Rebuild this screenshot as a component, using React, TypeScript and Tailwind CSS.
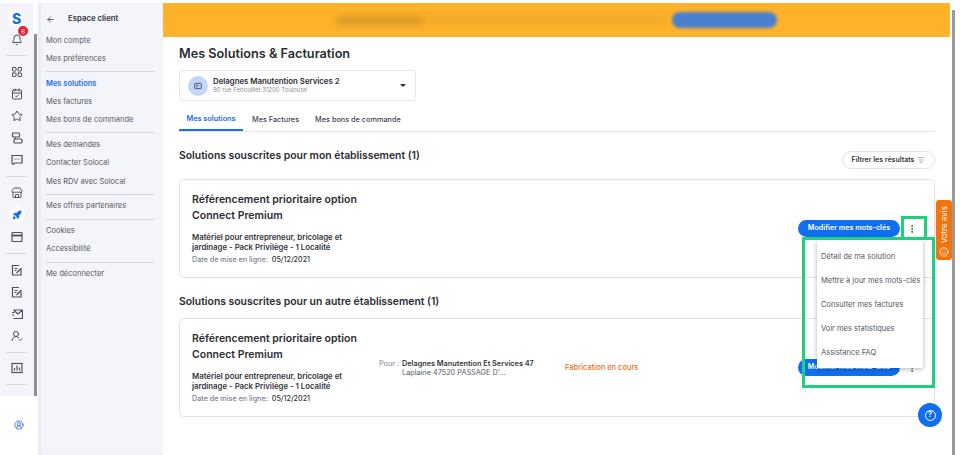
import React from "react";
import { ArrowLeft, Bell, CalendarCheck, CircleUserRound, EllipsisVertical, LayoutGrid, ListFilter, Rocket, Smile, Star, Store, UserRoundCheck } from "lucide-react";

const font = "font-['Inter','Noto_Sans',sans-serif]";

const navGroups = [
  ["Mon compte", "Mes préférences"],
  ["Mes solutions", "Mes factures", "Mes bons de commande"],
  ["Mes demandes", "Contacter Solocal", "Mes RDV avec Solocal"],
  ["Mes offres partenaires"],
  ["Cookies", "Accessibilité"],
  ["Me déconnecter"],
];

const menuItems = [
  "Détail de ma solution",
  "Mettre à jour mes mots-clés",
  "Consulter mes factures",
  "Voir mes statistiques",
  "Assistance FAQ",
];

function Glyph({ children }: { children: React.ReactNode }) {
  return (
    <svg width="12" height="12" viewBox="0 0 12 12" fill="none" stroke="currentColor" strokeWidth="1.2">
      {children}
    </svg>
  );
}

const ServerIcon = () => (
  <Glyph>
    <rect x="1.5" y="1" width="7" height="4" rx="1" />
    <rect x="3" y="7" width="8" height="4" rx="1" />
    <path d="M4 5v2" />
  </Glyph>
);
const ChatIcon = () => (
  <Glyph>
    <path d="M1 1.5h10v7.5H4l-2 1.5-1-1.5z" />
    <path d="M3.5 5.2h.8M5.6 5.2h.8M7.7 5.2h.8" />
  </Glyph>
);
const WindowIcon = () => (
  <Glyph>
    <rect x="1" y="1.5" width="10" height="9" rx="1" />
    <path d="M1 4.5h10" strokeWidth="1.8" />
  </Glyph>
);
const EditIcon = () => (
  <Glyph>
    <path d="M10 5.5V11H1.5V1.5H8" />
    <path d="M3.5 4.5h3M3.5 6.5h2M5.5 9l5-5" />
  </Glyph>
);
const MailIcon = () => (
  <Glyph>
    <path d="M2.5 2h9v8.5h-9M1 4.5h2.5M1 7h2M2.5 2l4.5 4 4.5-4" />
  </Glyph>
);
const ChartIcon = () => (
  <Glyph>
    <rect x="1" y="1.5" width="10" height="9" />
    <path d="M3.5 8.5V6M6 8.5V3.5M8.5 8.5V5.5" />
  </Glyph>
);
const PlaceIcon = () => (
  <svg width="8" height="8" viewBox="0 0 12 12" fill="none" stroke="currentColor" strokeWidth="1.4">
    <rect x="1" y="2" width="10" height="8" rx="1" />
    <path d="M3 5h4M3 7.5h2M8.5 7.5h1" />
  </svg>
);

function RailIcon({ children }: { children: React.ReactNode }) {
  return <div className="flex h-[22px] items-center justify-center text-[#4b4f5c]">{children}</div>;
}

function RailRule() {
  return <div className="mx-[6px] h-px bg-[#d6d7dc]" />;
}

function Rail() {
  return (
    <aside className="relative flex h-full w-[38px] shrink-0 flex-col">
      <div className="flex w-[33px] flex-1 flex-col bg-[#f4f5fb]">
        <div className="flex justify-center pt-[8px]">
          <div className="flex h-[15px] w-[15px] items-center justify-center rounded-[3px] bg-white text-[14px] leading-none font-extrabold text-[#0f6ff0]">
            S
          </div>
        </div>
        <div className="relative mt-[3px] mb-[4px]">
          <RailIcon>
            <Bell size={12} />
          </RailIcon>
          <span className="absolute top-[-3px] left-[18px] flex h-[10px] w-[10px] items-center justify-center rounded-full bg-[#e8212e] text-[6px] text-white">
            6
          </span>
        </div>
        <RailRule />
        <div className="mt-[5px] mb-[5px] flex flex-col">
          <RailIcon><LayoutGrid size={12} /></RailIcon>
          <RailIcon><CalendarCheck size={12} /></RailIcon>
          <RailIcon><Star size={12} /></RailIcon>
          <RailIcon><ServerIcon /></RailIcon>
          <RailIcon><ChatIcon /></RailIcon>
        </div>
        <RailRule />
        <div className="mt-[5px] mb-[5px] flex flex-col">
          <RailIcon><Store size={12} /></RailIcon>
          <div className="flex h-[22px] items-center justify-center">
            <div className="flex h-[16px] w-[16px] items-center justify-center rounded-full bg-white">
              <Rocket size={10} className="fill-[#0f6ff0] text-[#0f6ff0]" />
            </div>
          </div>
          <RailIcon><WindowIcon /></RailIcon>
        </div>
        <RailRule />
        <div className="mt-[5px] mb-[5px] flex flex-col">
          <RailIcon><EditIcon /></RailIcon>
          <RailIcon><EditIcon /></RailIcon>
          <RailIcon><MailIcon /></RailIcon>
          <RailIcon><UserRoundCheck size={12} /></RailIcon>
        </div>
        <RailRule />
        <div className="mt-[4px] mb-[5px]">
          <RailIcon><ChartIcon /></RailIcon>
        </div>
        <RailRule />
        <div className="h-[11px]" />
        <div className="-mr-[5px] flex flex-1 justify-center bg-white pt-[24px]">
          <CircleUserRound size={10} className="text-[#2f6fe4]" />
        </div>
      </div>
      {/* rail scrollbar */}
      <div className="absolute top-[31px] right-0 h-[362px] w-[5px] border-r border-l border-r-white border-l-[#f4f5fb] bg-[#8f8f8f]" />
    </aside>
  );
}

function SubNav() {
  return (
    <nav className="h-full w-[125px] shrink-0 bg-[#f4f5fb] pr-[8px] pl-[8px] shadow-[inset_3px_0_3px_rgba(0,0,0,0.04)]">
      <div className="flex h-[28px] items-center pt-[4px] text-[#33363f]">
        <ArrowLeft size={9} />
        <span className="ml-[13px] text-[7.8px] font-semibold">Espace client</span>
      </div>
      {navGroups.map((group, i) => (
        <div key={i} className={i > 0 ? "border-t border-[#d5d6da] pt-[2px]" : ""}>
          {group.map((label, j) => (
            <div
              key={label}
              className={`flex h-[18.3px] items-center text-[7.5px] whitespace-nowrap ${
                label === "Mes solutions" ? "font-semibold text-[#1e6cf0]" : "text-[#55585f]"
              } ${j === group.length - 1 ? "mb-[3.5px]" : ""}`}
            >
              {label}
            </div>
          ))}
        </div>
      ))}
    </nav>
  );
}

function Banner() {
  return (
    <div className="flex h-[34px] items-center overflow-hidden bg-[#fdb22a]">
      <div className="ml-[172px] h-[9px] w-[90px] rounded-full bg-[#d99a26] blur-[3px]" />
      <div className="ml-[4px] h-[6px] w-[235px] rounded-full bg-[#eaa82a] blur-[3px]" />
      <div className="ml-[8px] h-[16px] w-[105px] rounded-full bg-[#4a80cf] blur-[1.5px]" />
    </div>
  );
}

function SolutionCard({ children, action }: { children?: React.ReactNode; action?: React.ReactNode }) {
  return (
    <div className="flex h-[99px] items-center rounded-[5px] border border-[#e2e3e6] bg-white pl-[12px]">
      <div className="w-[187px] shrink-0">
        <div className="text-[10.5px] leading-[16px] font-semibold text-[#2b2d33]">Référencement prioritaire option</div>
        <div className="text-[10.5px] leading-[16px] font-semibold text-[#2b2d33]">Connect Premium</div>
        <div className="mt-[8px] text-[7.8px] leading-[10px] font-semibold whitespace-nowrap text-[#33353b]">
          Matériel pour entrepreneur, bricolage et
          <br />
          jardinage - Pack Privilège - 1 Localité
        </div>
        <div className="mt-[2px] text-[7.2px] leading-[12px] font-medium text-[#7c8194]">
          Date de mise en ligne: <span className="ml-[2px] text-[#33353b]">05/12/2021</span>
        </div>
      </div>
      {children}
      <div className="ml-auto flex items-center pr-[13px]">{action}</div>
    </div>
  );
}

function KeywordsAction() {
  return (
    <>
      <button className="flex h-[17px] w-[102px] items-center justify-center rounded-full bg-[#0f6ff0] text-[7.2px] font-semibold whitespace-nowrap text-white">
        Modifier mes mots-clés
      </button>
      <span className="ml-[3px] flex w-[18px] justify-center text-[#3b3e47]">
        <EllipsisVertical size={10} />
      </span>
    </>
  );
}

export default function App() {
  return (
    <div className={`relative flex h-[455px] w-[960px] overflow-hidden bg-white pt-[3px] ${font}`}>
      <Rail />
      <SubNav />
      <main className="h-full w-[787px] shrink-0 bg-white">
        <Banner />
        <div className="pr-[15px] pl-[16px]">
          <h1 className="mt-[7px] text-[12.7px] leading-[20px] font-semibold text-[#2b2d33]">Mes Solutions &amp; Facturation</h1>
          <div className="mt-[6px] flex h-[31px] w-[237px] items-center rounded-[3px] border border-[#e6e7ea] pr-[9px] pl-[8px]">
            <div className="flex h-[20px] w-[20px] items-center justify-center rounded-full bg-[#c3d8f9] text-[#44506a]">
              <PlaceIcon />
            </div>
            <div className="ml-[5px] flex-1">
              <div className="text-[7.8px] leading-[9px] font-semibold text-[#2b2d33]">Delagnes Manutention Services 2</div>
              <div className="text-[6px] leading-[8px] text-[#8a8d95]">90 rue Fenouillet 31200 Toulouse</div>
            </div>
            <span className="h-0 w-0 border-x-[3px] border-t-[3px] border-x-transparent border-t-[#2b2d33]" />
          </div>
          <div className="mt-[5px] flex h-[26px] border-b border-[#e4e5e8] pt-[3px] text-[7.3px] font-medium text-[#44474f]">
            <div className="flex w-[64px] items-center justify-center border-b-2 border-[#1e6cf0] font-semibold text-[#1e6cf0]">Mes solutions</div>
            <div className="ml-[9px] flex items-center">Mes Factures</div>
            <div className="ml-[16px] flex items-center">Mes bons de commande</div>
          </div>
          <div className="mt-[16px] flex items-start justify-between">
            <h2 className="text-[10.4px] leading-[16px] font-semibold text-[#2b2d33]">Solutions souscrites pour mon établissement (1)</h2>
            <button className="mt-[3px] flex h-[18px] w-[93px] items-center justify-center gap-[3px] rounded-full border border-[#e2e3e6] text-[7px] font-semibold text-[#33353b]">
              Filtrer les résultats <ListFilter size={8} className="text-[#8a8d95]" />
            </button>
          </div>
          <div className="mt-[10px]">
            <SolutionCard action={<KeywordsAction />} />
          </div>
          <h2 className="mt-[16px] text-[10.4px] leading-[16px] font-semibold text-[#2b2d33]">Solutions souscrites pour un autre établissement (1)</h2>
          <div className="mt-[8px]">
            <SolutionCard action={<KeywordsAction />}>
              <div className="flex text-[7.3px] leading-[9px]">
                <span className="w-[23px] text-[#7c8194]">Pour :</span>
                <div className="w-[163px]">
                  <div className="font-semibold text-[#33353b]">Delagnes Manutention Et Services 47</div>
                  <div className="text-[#55585f]">Laplaine 47520 PASSAGE D'...</div>
                </div>
              </div>
              <span className="text-[7.5px] font-medium text-[#e8701a]">Fabrication en cours</span>
            </SolutionCard>
          </div>
        </div>
      </main>

      {/* page scrollbar */}
      <div className="absolute top-[10px] right-[5px] h-[445px] w-[3px] bg-[#9a9a9a]" />

      {/* side tab */}
      <div className="absolute top-[200px] left-[936px] flex h-[60px] w-[16px] flex-col items-center justify-between rounded-[3px] bg-[#f3730e] pt-[6px] pb-[3px] text-white">
        <span className="rotate-180 text-[8px] whitespace-nowrap [writing-mode:vertical-rl]">Votre avis</span>
        <Smile size={10} />
      </div>

      {/* dropdown menu */}
      <div className="absolute top-[240px] left-[817px] z-10 flex h-[128px] w-[106px] flex-col bg-white px-[4px] pt-[5px] shadow-[0_1px_5px_rgba(0,0,0,0.3)]">
        {menuItems.map((item) => (
          <div key={item} className="flex h-[24px] shrink-0 items-center text-[7.5px] whitespace-nowrap text-[#55585f]">
            {item}
          </div>
        ))}
      </div>

      {/* annotation boxes */}
      <div className="pointer-events-none absolute top-[216px] left-[901px] z-20 h-[24px] w-[26px] border-[3px] border-[#1fd17f]" />
      <div className="pointer-events-none absolute top-[237px] left-[802px] z-20 h-[151px] w-[133px] border-[3px] border-[#1fd17f]" />

      {/* help button */}
      <button className="absolute top-[403px] left-[918px] z-20 flex h-[24px] w-[24px] items-center justify-center rounded-full bg-[#0f6ff0]">
        <span className="flex h-[11px] w-[11px] items-center justify-center rounded-full border border-white text-[7px] font-bold text-white">?</span>
      </button>
    </div>
  );
}
